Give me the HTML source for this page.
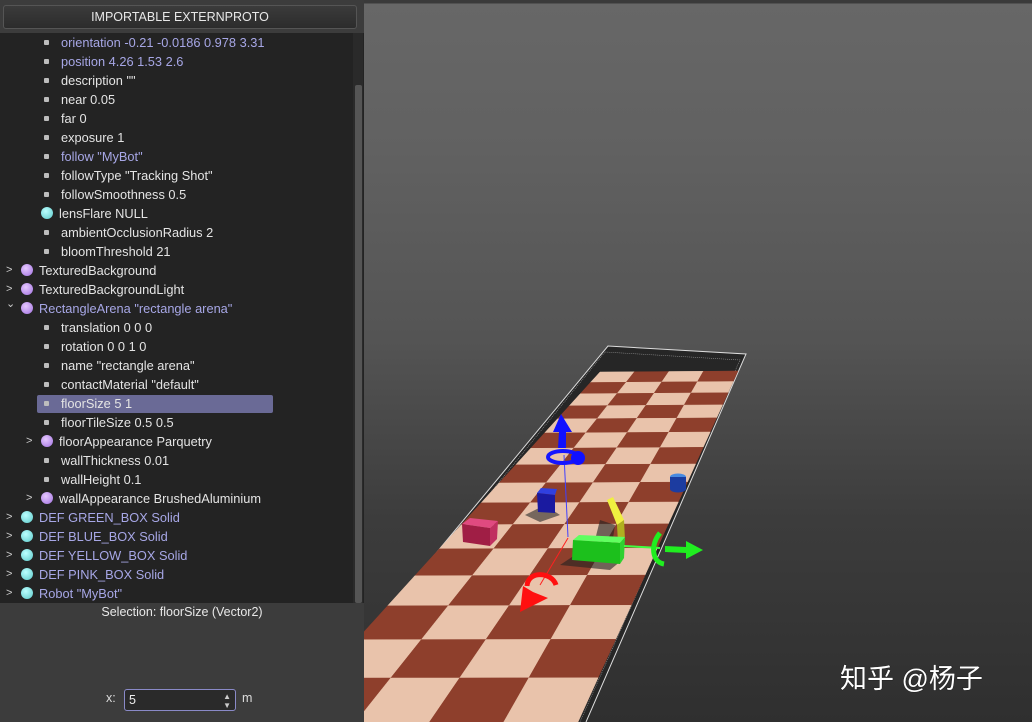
<!DOCTYPE html>
<html><head><meta charset="utf-8"><style>
*{margin:0;padding:0;box-sizing:border-box}
body{width:1032px;height:722px;overflow:hidden;background:#3a3a3a;font-family:"Liberation Sans","DejaVu Sans",sans-serif;position:relative}
#left{position:absolute;left:0;top:0;width:364px;height:722px;background:#3c3c3c}
#btn{position:absolute;left:3px;top:5px;width:354px;height:24px;border:1px solid #555;border-radius:3px;background:linear-gradient(#3b3b3b,#2c2c2c);color:#e8e8e8;font-size:12.5px;text-align:center;line-height:22px}
#tree{position:absolute;left:0;top:33px;width:364px;height:570px;background:#232323;overflow:hidden}
#sb{position:absolute;left:353px;top:33px;width:10px;height:570px;background:#2a2a2a}
#sb div{position:absolute;left:2px;top:52px;width:7px;height:518px;background:#555;border-radius:2px}
.r{position:absolute;height:19px;line-height:19px;font-size:12.8px;color:#e4e4e4;white-space:nowrap}
.p{color:#a7a7e6}
.b{position:absolute;width:5px;height:5px;background:#bdbdbd;top:7px;border-radius:1px}
.c{position:absolute;width:12px;height:12px;border-radius:50%;top:3px}
.cy{background:radial-gradient(circle at 40% 35%,#bff,#5cc9c9)}
.pu{background:radial-gradient(circle at 40% 35%,#e6c8ff,#a070e0)}
.a{position:absolute;color:#cfcfcf;font-size:11px;top:0}
#sel{position:absolute;left:37px;top:362px;width:236px;height:18px;background:#6a6a96;border-radius:2px}
#view{position:absolute;left:364px;top:0;width:668px;height:722px;background:linear-gradient(#3a3a3a 0,#3a3a3a 3px,#676767 4px,#616161 150px,#545454 340px,#3c3c3c 520px,#2f2f2f 722px)}
</style></head><body>
<div id="left">
<div id="btn">IMPORTABLE EXTERNPROTO</div>
<div id="tree">
<div id="sel"></div>
</div>
<div id="sb"><div></div></div>
<div style="position:absolute;left:0;top:603px;width:364px;text-align:center;color:#e8e8e8;font-size:12.5px;line-height:18px">Selection: floorSize (Vector2)</div>
<div style="position:absolute;left:106px;top:691px;color:#ddd;font-size:12.5px">x:</div>
<div style="position:absolute;left:124px;top:689px;width:112px;height:22px;border:1px solid #8a8ac8;border-radius:3px;background:#2a2a2a;color:#eee;font-size:12.5px;line-height:20px;padding-left:4px">5<span style="position:absolute;right:4px;top:0;font-size:8px;line-height:9px;color:#ccc;padding-top:2px">▲<br>▼</span></div>
<div style="position:absolute;left:242px;top:691px;color:#ddd;font-size:12.5px">m</div>
</div>
<div id="view">
<svg width="668" height="722" style="position:absolute;left:0;top:0" id="sv">
<g transform="translate(-364,0)">
<polygon points="608,346 746,354 586,722 364,722 364,640" fill="#262626"/>
<polyline points="364,640 608,346 746,354 586,722" fill="none" stroke="#ddd" stroke-width="1"/>
<polyline points="364,648 605,352 740,360 580,722" fill="none" stroke="#999" stroke-width="0.6" stroke-dasharray="1,1"/>
<g id="fl"></g>
<polygon points="525,515 545,505 560,515 540,522" fill="#2a2a2a" opacity=".6"/>
<polygon points="560,565 575,555 622,560 610,570" fill="#222" opacity=".6"/>
<polygon points="595,540 600,520 615,525 612,545" fill="#222" opacity=".6"/>
<polygon points="462,524 470,518 498,521 490,528" fill="#e04a80"/>
<polygon points="462,524 490,528 490,546 463,542" fill="#a01e45"/>
<polygon points="490,528 498,521 497,539 490,546" fill="#c03060"/>
<polygon points="537,493 541,488 557,489 555,495" fill="#3040e0"/>
<polygon points="537,493 555,495 555,513 538,512" fill="#1a1aa0"/>
<ellipse cx="678" cy="477" rx="8" ry="3.5" fill="#4a8ae0"/>
<rect x="670" y="477" width="16" height="12" fill="#1c3ca0"/>
<ellipse cx="678" cy="489" rx="8" ry="3.5" fill="#1c3ca0"/>
<polygon points="607,500 613,497 624,520 617,525" fill="#f0f040"/>
<polygon points="617,525 624,520 625,540 618,543" fill="#b0b020"/>
<polygon points="573,540 579,535 625,537 620,543" fill="#60ff60"/>
<polygon points="573,540 620,543 620,564 572,560" fill="#1cc01c"/>
<polygon points="620,543 625,537 624,558 620,564" fill="#30d030"/>
<line x1="564" y1="455" x2="568" y2="537" stroke="#4040ff" stroke-width="1"/>
<line x1="624" y1="546" x2="660" y2="548" stroke="#40ff40" stroke-width="2"/>
<line x1="568" y1="538" x2="540" y2="585" stroke="#ff2020" stroke-width="1"/>
<polygon points="561,414 553,432 559,432 558,448 566,448 566,432 572,432" fill="#1010ff"/>
<ellipse cx="563" cy="457" rx="15" ry="6" fill="none" stroke="#1515ff" stroke-width="4"/>
<circle cx="578" cy="458" r="7" fill="#1010ff"/>
<polygon points="703,550 686,541 686,547 665,546 665,552 686,553 686,559" fill="#20ee20"/>
<path d="M660,533 C650,545 652,562 664,564" fill="none" stroke="#20ee20" stroke-width="5"/>
<path d="M556,585 C552,572 528,570 527,586" fill="none" stroke="#ff1010" stroke-width="5"/>
<polygon points="520,612 523,586 533,592 548,598" fill="#ff1010"/>
</g>
<text x="476" y="688" font-family="'Liberation Sans','Noto Sans CJK SC',sans-serif" font-size="27" fill="#fff" style="paint-order:stroke" stroke="#222" stroke-width="1">知乎 @杨子</text>
</svg>
</div>
<script>
var rows=[
[2,'orientation -0.21 -0.0186 0.978 3.31',1],
[2,'position 4.26 1.53 2.6',1],
[2,'description ""'],[2,'near 0.05'],[2,'far 0'],[2,'exposure 1'],
[2,'follow "MyBot"',1],[2,'followType "Tracking Shot"'],[2,'followSmoothness 0.5'],
['c','lensFlare NULL'],[2,'ambientOcclusionRadius 2'],[2,'bloomThreshold 21'],
['p1','TexturedBackground'],['p1','TexturedBackgroundLight'],['p1o','RectangleArena "rectangle arena"',1],
[2,'translation 0 0 0'],[2,'rotation 0 0 1 0'],[2,'name "rectangle arena"'],[2,'contactMaterial "default"'],
[2,'floorSize 5 1'],[2,'floorTileSize 0.5 0.5'],['p2','floorAppearance Parquetry'],
[2,'wallThickness 0.01'],[2,'wallHeight 0.1'],['p2','wallAppearance BrushedAluminium'],
['c1','DEF GREEN_BOX Solid',1],['c1','DEF BLUE_BOX Solid',1],['c1','DEF YELLOW_BOX Solid',1],['c1','DEF PINK_BOX Solid',1],['c1','Robot "MyBot"',1]];
var t=document.getElementById('tree'),h='';
rows.forEach(function(r,i){var y=i*19;var k=r[0],cls=r[2]?'r p':'r';
 if(k===2){h+='<div class="b" style="left:44px;top:'+(y+7)+'px"></div><div class="'+cls+'" style="left:61px;top:'+y+'px">'+r[1]+'</div>';}
 else if(k==='c'){h+='<div class="c cy" style="left:41px;top:'+(y+3)+'px"></div><div class="'+cls+'" style="left:59px;top:'+y+'px">'+r[1]+'</div>';}
 else if(k==='p2'){h+='<div class="a" style="left:26px;top:'+y+'px;line-height:19px">&gt;</div><div class="c pu" style="left:41px;top:'+(y+3)+'px"></div><div class="'+cls+'" style="left:59px;top:'+y+'px">'+r[1]+'</div>';}
 else {var ar=k==='p1o'?'⌄':'&gt;';var col=k==='c1'?'cy':'pu';
 h+='<div class="a" style="left:6px;top:'+(k==='p1o'?y-4:y)+'px;line-height:19px">'+ar+'</div><div class="c '+col+'" style="left:21px;top:'+(y+3)+'px"></div><div class="'+cls+'" style="left:39px;top:'+y+'px">'+r[1]+'</div>';}
});
t.innerHTML+=h;
var P=[[600,372],[738,371],[578,722],[282,722]];
var x0=P[0][0],y0=P[0][1],x1=P[1][0],y1=P[1][1],x2=P[2][0],y2=P[2][1],x3=P[3][0],y3=P[3][1];
var dx1=x1-x2,dx2=x3-x2,dx3=x0-x1+x2-x3,dy1=y1-y2,dy2=y3-y2,dy3=y0-y1+y2-y3;
var den=dx1*dy2-dx2*dy1,g=(dx3*dy2-dx2*dy3)/den,hh=(dx1*dy3-dx3*dy1)/den;
var a=x1-x0+g*x1,b=x3-x0+hh*x3,d=y1-y0+g*y1,e=y3-y0+hh*y3;
function m(u,v){var w=g*u+hh*v+1;return ((a*u+b*v+x0)/w).toFixed(1)+','+((d*u+e*v+y0)/w).toFixed(1);}
var NC=4,NR=16,s='';
for(var j=0;j<NR;j++)for(var i=0;i<NC;i++){var u0=i/NC,u1=(i+1)/NC,v0=j/NR,v1=(j+1)/NR;
 var c=((i+j)%2)?'#8e3f2c':'#e9c3ab';
 s+='<polygon points="'+m(u0,v0)+' '+m(u1,v0)+' '+m(u1,v1)+' '+m(u0,v1)+'" fill="'+c+'" stroke="'+c+'" stroke-width="0.5"/>';}
document.getElementById('fl').innerHTML=s;
</script>
</body></html>
